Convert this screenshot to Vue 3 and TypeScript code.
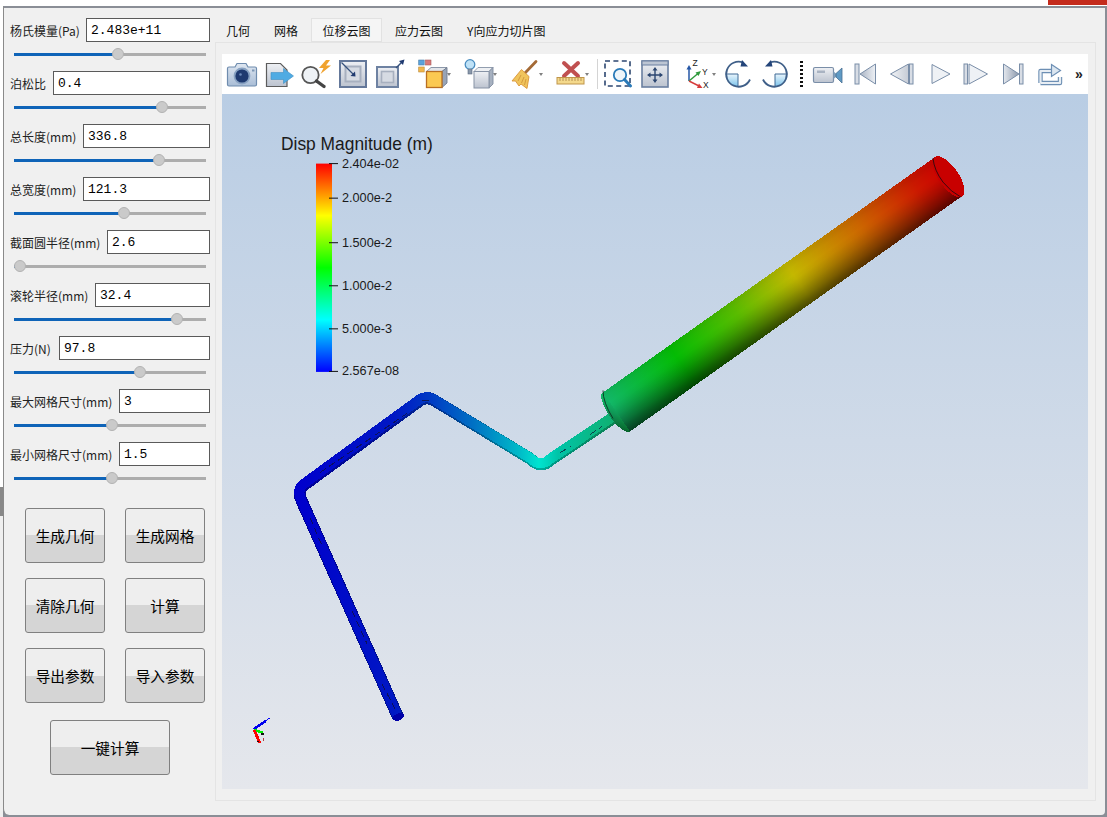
<script setup lang="ts">
interface Param {
  label: string;
  value: string;
  inputWidth: number;
  thumb: number;
}

const params: Param[] = [
  { label: '杨氏模量(Pa)', value: '2.483e+11', inputWidth: 124, thumb: 103.5 },
  { label: '泊松比', value: '0.4', inputWidth: 157, thumb: 147.5 },
  { label: '总长度(mm)', value: '336.8', inputWidth: 127, thumb: 144.5 },
  { label: '总宽度(mm)', value: '121.3', inputWidth: 127, thumb: 109.5 },
  { label: '截面圆半径(mm)', value: '2.6', inputWidth: 103, thumb: 5.5 },
  { label: '滚轮半径(mm)', value: '32.4', inputWidth: 115, thumb: 162.5 },
  { label: '压力(N)', value: '97.8', inputWidth: 151, thumb: 125.5 },
  { label: '最大网格尺寸(mm)', value: '3', inputWidth: 91, thumb: 97.5 },
  { label: '最小网格尺寸(mm)', value: '1.5', inputWidth: 91, thumb: 97.5 },
];

const actions = ['生成几何', '生成网格', '清除几何', '计算', '导出参数', '导入参数'];
const tabs = ['几何', '网格', '位移云图', '应力云图', 'Y向应力切片图'];

const ticks = [
  { y: 163.5, text: '2.404e-02' },
  { y: 198, text: '2.000e-2' },
  { y: 242.5, text: '1.500e-2' },
  { y: 285.5, text: '1.000e-2' },
  { y: 328.5, text: '5.000e-3' },
  { y: 371, text: '2.567e-08' },
];

// facet shading across the roller, top edge to bottom edge
const shade = [
  [0, 0.06], [0.1, 0.02], [0.25, 0], [0.35, 0.03], [0.45, 0.1], [0.55, 0.18],
  [0.65, 0.28], [0.75, 0.38], [0.85, 0.5], [1, 0.65],
];

const pipe = 'M398 716 L302 501 Q296 489 306 483 L420 400 Q428 395 436 401 L530 458 Q541 469 551 459 L614 417';
</script>

<template>
  <div class="screen">
    <div class="top-strip"><div class="close-edge"></div></div>
    <div class="body-row">
      <div class="left-strip">
        <div class="strip-a"></div>
        <div class="strip-b"></div>
        <div class="strip-c"></div>
      </div>
      <div class="window">
        <aside class="sidebar">
          <div v-for="p in params" :key="p.label" class="param">
            <div class="param-row">
              <label>{{ p.label }}</label>
              <input :value="p.value" :style="{ width: p.inputWidth + 'px' }" readonly />
            </div>
            <div class="slider">
              <div class="slider-fill" :style="{ width: p.thumb + 'px' }"></div>
              <div class="slider-thumb" :style="{ left: p.thumb - 6 + 'px' }"></div>
            </div>
          </div>
          <div class="actions">
            <button v-for="a in actions" :key="a">{{ a }}</button>
          </div>
          <button class="run-all">一键计算</button>
        </aside>

        <main class="content">
          <div class="tabs">
            <div v-for="t in tabs" :key="t" class="tab" :class="{ active: t === '位移云图' }">{{ t }}</div>
          </div>
          <div class="pane">
            <div class="toolbar">
              <!-- camera -->
              <svg class="ic" viewBox="0 0 32 32">
                <defs>
                  <linearGradient id="bodyG" x1="0" y1="0" x2="0" y2="1">
                    <stop offset="0" stop-color="#dfe7f1" />
                    <stop offset="1" stop-color="#a9bdd6" />
                  </linearGradient>
                  <linearGradient id="greyG" x1="0" y1="0" x2="0" y2="1">
                    <stop offset="0" stop-color="#eef0f4" />
                    <stop offset="1" stop-color="#bcc3cf" />
                  </linearGradient>
                  <linearGradient id="vcrG" x1="0" y1="0" x2="1" y2="0">
                    <stop offset="0" stop-color="#aab4c4" />
                    <stop offset="1" stop-color="#eef1f5" />
                  </linearGradient>
                  <linearGradient id="vcrD" x1="0" y1="0" x2="1" y2="0">
                    <stop offset="0" stop-color="#e4e8ee" />
                    <stop offset="1" stop-color="#8d99ac" />
                  </linearGradient>
                  <linearGradient id="quadG" x1="0" y1="0" x2="0" y2="1">
                    <stop offset="0" stop-color="#eaf5fc" />
                    <stop offset="1" stop-color="#7cc4ec" />
                  </linearGradient>
                </defs>
                <path d="M3 9 H9 L11 5.5 H20 L22 9 H29 Q30.5 9 30.5 10.5 V26.5 Q30.5 28 29 28 H3 Q1.5 28 1.5 26.5 V10.5 Q1.5 9 3 9Z" fill="url(#bodyG)" stroke="#6f8cae" stroke-width="1.2" />
                <circle cx="16" cy="18" r="8.4" fill="#88a2c2" />
                <circle cx="16" cy="18" r="6.6" fill="#1f3a70" />
                <circle cx="14.5" cy="16.5" r="1.3" fill="#6a88b8" />
                <rect x="26" y="11.5" width="2.5" height="2" fill="#7d97b6" />
              </svg>
              <!-- save data -->
              <svg class="ic" viewBox="0 0 32 32">
                <path d="M3.5 5.5 H17.5 L24 12 V28.5 H3.5Z" fill="url(#greyG)" stroke="#5c5c5c" stroke-width="1.2" />
                <path d="M8 14.5 H20.5 V10.5 L30.5 18 L20.5 25.5 V21.5 H8Z" fill="#4fabe3" stroke="#3f8fc4" stroke-width=".6" />
              </svg>
              <!-- magnifier bolt -->
              <svg class="ic" viewBox="0 0 32 32">
                <circle cx="10.5" cy="17" r="8.2" fill="#eef2f6" stroke="#555" stroke-width="1.8" />
                <path d="M16.5 23 L24 28.5" stroke="#444" stroke-width="3.4" stroke-linecap="round" />
                <path d="M26 2 L19 10 H23.5 L20.5 16 L31 7.5 H26 L30 2Z" fill="#f0a22e" />
              </svg>
              <!-- reset box -->
              <svg class="ic" viewBox="0 0 32 32">
                <rect x="3" y="3" width="26" height="26" fill="url(#greyG)" stroke="#64789a" stroke-width="2" />
                <rect x="8.5" y="8.5" width="15" height="15" fill="#d6dbe3" stroke="#a7b0bf" stroke-width="2" />
                <path d="M4.5 4.5 L17 17" stroke="#35507c" stroke-width="1.3" />
                <path d="M18.5 18.5 L18 13.5 L13.5 18Z" fill="#1f3a70" />
              </svg>
              <!-- box outward -->
              <svg class="ic" viewBox="0 0 32 32">
                <rect x="3" y="9" width="21" height="20" fill="url(#greyG)" stroke="#6e82a2" stroke-width="2" />
                <rect x="7.5" y="13.5" width="12" height="11" fill="#d6dbe3" stroke="#a7b0bf" stroke-width="1.6" />
                <path d="M22 10 L28 4" stroke="#35507c" stroke-width="1.4" />
                <path d="M30.5 1.5 L25 3 L29 7Z" fill="#1f3a70" />
              </svg>
              <!-- representation -->
              <div class="menu wide first-menu">
                <svg class="ic" viewBox="0 0 32 32">
                  <rect x="1.7" y="2" width="5.5" height="5" fill="#5aa2dc" stroke="#4a7ea8" stroke-width=".6" />
                  <rect x="8.5" y="2" width="5.5" height="5" fill="#d87a7a" stroke="#a75a5a" stroke-width=".6" />
                  <rect x="1.7" y="9" width="5.5" height="5" fill="#f2b64a" stroke="#b88a3a" stroke-width=".6" />
                  <path d="M9.5 13.5 L14 9.5 H30 L25 13.5Z" fill="#e3e6ea" stroke="#7f8ca0" stroke-width=".9" />
                  <path d="M25 13.5 L30 9.5 V25 L25 29.5Z" fill="#98a4b6" stroke="#6f7c90" stroke-width=".9" />
                  <rect x="9.5" y="13.5" width="15.5" height="16" fill="#fbc952" stroke="#b96f22" stroke-width="1.3" />
                </svg>
                <span class="caret"></span>
              </div>
              <!-- light cube -->
              <div class="menu wide">
                <svg class="ic" viewBox="0 0 32 32">
                  <path d="M11 13.5 L15 9.5 H30 L26 13.5Z" fill="#eef0f3" stroke="#8793a6" stroke-width=".9" />
                  <path d="M26 13.5 L30 9.5 V26 L26 30Z" fill="#a7b1c0" stroke="#808ca0" stroke-width=".9" />
                  <rect x="11" y="13.5" width="15" height="16.5" fill="url(#greyG)" stroke="#8793a6" stroke-width="1" />
                  <circle cx="7" cy="6.5" r="4.8" fill="#bfe2f7" stroke="#4a8dc0" stroke-width="1.3" />
                  <rect x="5" y="11" width="4" height="5" fill="#8a98aa" stroke="#596a80" stroke-width=".6" />
                </svg>
                <span class="caret"></span>
              </div>
              <!-- broom -->
              <div class="menu wide">
                <svg class="ic" viewBox="0 0 32 32">
                  <path d="M27 3.5 L16 15" stroke="#a46a36" stroke-width="2.8" stroke-linecap="round" />
                  <path d="M12.5 11.5 L20 18.5 L18 30.5 L12 26 L10 28 L6.5 23 L3 23Z" fill="#f0c45c" stroke="#d9953a" stroke-width=".9" />
                  <path d="M12 17 L9 23 M15 19 L12.5 25 M17 21 L15.5 27" stroke="#c98a34" stroke-width=".7" />
                </svg>
                <span class="caret"></span>
              </div>
              <!-- delete ruler -->
              <div class="menu wide">
                <svg class="ic" viewBox="0 0 32 32">
                  <path d="M9 5 L23 18 M23 5 L9 18" stroke="#c05050" stroke-width="4" stroke-linecap="round" />
                  <rect x="2" y="19.5" width="27" height="6.5" fill="#f4d98c" stroke="#c0954a" stroke-width="1" />
                  <path d="M5 20 V23 M8 20 V23 M11 20 V23 M14 20 V23 M17 20 V23 M20 20 V23 M23 20 V23 M26 20 V23" stroke="#a88444" stroke-width=".8" />
                </svg>
                <span class="caret"></span>
              </div>
              <div class="sep"></div>
              <!-- zoom to box -->
              <svg class="ic" viewBox="0 0 32 32">
                <rect x="3" y="3" width="25" height="25" fill="none" stroke="#2c4670" stroke-width="1.6" stroke-dasharray="5 3.4" />
                <circle cx="18" cy="17" r="6.2" fill="#eef5fa" stroke="#2a7ab8" stroke-width="1.8" />
                <path d="M22.5 21.5 L28.5 28" stroke="#2a7ab8" stroke-width="3" stroke-linecap="round" />
              </svg>
              <!-- center -->
              <svg class="ic" viewBox="0 0 32 32">
                <rect x="3" y="3" width="26" height="26" fill="url(#greyG)" stroke="#6a7fa0" stroke-width="1.6" />
                <rect x="3" y="3" width="26" height="4" fill="#bcc5d3" stroke="#6a7fa0" stroke-width="1" />
                <path d="M16 11 V23 M10 17 H22" stroke="#2c4670" stroke-width="1.4" />
                <path d="M16 9 L13.5 12.5 H18.5Z M16 25 L13.5 21.5 H18.5Z M8 17 L11.5 14.5 V19.5Z M24 17 L20.5 14.5 V19.5Z" fill="#2c4670" />
              </svg>
              <!-- axes -->
              <div class="menu axes">
                <svg class="ic" viewBox="0 0 32 32">
                  <path d="M7 23 V10" stroke="#2456a6" stroke-width="1.5" />
                  <path d="M7 7 L4.5 11.5 H9.5Z" fill="#2456a6" />
                  <path d="M7 23 L16 15.5" stroke="#2f9a3c" stroke-width="1.5" />
                  <path d="M19 13 L13.5 14.5 L16.5 18Z" fill="#2f9a3c" />
                  <path d="M7 23 L17 28" stroke="#d63c3c" stroke-width="1.5" />
                  <path d="M20.5 30 L15 30 L17 25.5Z" fill="#d63c3c" />
                  <text x="10.5" y="8" class="ax">Z</text>
                  <text x="20" y="16.5" class="ax">Y</text>
                  <text x="21" y="29.5" class="ax">X</text>
                </svg>
                <span class="caret"></span>
              </div>
              <!-- rotate cw -->
              <svg class="ic" viewBox="0 0 32 32">
                <path d="M3.5 16 H16 V28.5 A12.5 12.5 0 0 1 3.5 16Z" fill="url(#quadG)" />
                <path d="M3.5 16 H16 V28.5" fill="none" stroke="#3f6a96" stroke-width="1" />
                <path d="M28 21.5 A12.5 12.5 0 1 1 21 4.5" fill="none" stroke="#3f5f88" stroke-width="1.8" />
                <path d="M26 8.5 L18.5 8.5 L20 2Z" fill="#24457a" />
              </svg>
              <!-- rotate ccw -->
              <svg class="ic" viewBox="0 0 32 32">
                <path d="M28.5 16 H16 V28.5 A12.5 12.5 0 0 0 28.5 16Z" fill="url(#quadG)" />
                <path d="M28.5 16 H16 V28.5" fill="none" stroke="#3f6a96" stroke-width="1" />
                <path d="M4 21.5 A12.5 12.5 0 1 0 11 4.5" fill="none" stroke="#3f5f88" stroke-width="1.8" />
                <path d="M6 8.5 L13.5 8.5 L12 2Z" fill="#24457a" />
              </svg>
              <div class="dots"></div>
              <!-- video -->
              <svg class="ic video" viewBox="0 0 32 32">
                <rect x="2.5" y="9.5" width="20" height="15" rx="1.5" fill="url(#greyG)" stroke="#7a8ea8" stroke-width="1.2" />
                <rect x="6" y="12.5" width="8" height="2.5" fill="#a9b3c2" />
                <path d="M22.5 13.5 L25 15.5 V19 L22.5 21Z" fill="#7fa0bd" />
                <path d="M25 15.5 L31 10 V25 L25 19Z" fill="#5f9ac4" stroke="#496f92" stroke-width=".8" />
              </svg>
              <!-- first -->
              <svg class="ic" viewBox="0 0 32 32">
                <rect x="7" y="6" width="4" height="20" fill="#d8dde5" stroke="#7a8ea8" />
                <path d="M27.5 6 V26 L12 16Z" fill="url(#vcrG)" stroke="#7a8ea8" />
              </svg>
              <!-- previous -->
              <svg class="ic" viewBox="0 0 32 32">
                <path d="M23.5 6 V26 L5.5 16Z" fill="url(#vcrD)" stroke="#7a8ea8" fill-opacity=".5" />
                <rect x="24.5" y="6" width="3.5" height="20" fill="#d8dde5" stroke="#7a8ea8" />
              </svg>
              <!-- play -->
              <svg class="ic" viewBox="0 0 32 32">
                <path d="M10 6.5 L28 16 L10 25.5Z" fill="#eef1f5" stroke="#7a8ea8" />
              </svg>
              <!-- next -->
              <svg class="ic" viewBox="0 0 32 32">
                <rect x="5" y="6" width="3.5" height="20" fill="#d8dde5" stroke="#7a8ea8" />
                <path d="M10 6 L28.5 16 L10 26Z" fill="#eef1f5" stroke="#7a8ea8" />
              </svg>
              <!-- last -->
              <svg class="ic" viewBox="0 0 32 32">
                <path d="M7.5 6 L23 16 L7.5 26Z" fill="url(#vcrD)" stroke="#7a8ea8" />
                <rect x="23.5" y="6" width="3.5" height="20" fill="#d8dde5" stroke="#7a8ea8" />
              </svg>
              <!-- loop -->
              <svg class="ic" viewBox="0 0 32 32">
                <path d="M7.5 25 V13 H19 M7.5 25 H27 V19" fill="none" stroke="#6d8fb4" stroke-width="4.4" stroke-linejoin="round" />
                <path d="M7.5 25 V13 H19 M7.5 25 H27 V19" fill="none" stroke="#e8eef4" stroke-width="2.2" stroke-linejoin="round" />
                <path d="M18.5 6.5 L27.5 12.5 L18.5 18.5Z" fill="#dbe6f0" stroke="#6d8fb4" stroke-width="1.2" />
              </svg>
              <span class="more">»</span>
            </div>

            <div class="viewport">
              <svg class="scene" viewBox="222 94 866 694" preserveAspectRatio="none">
                <defs>
                  <linearGradient id="bg" x1="0" y1="0" x2="0" y2="1">
                    <stop offset="0" stop-color="#b9cde4" />
                    <stop offset="1" stop-color="#e5e7ec" />
                  </linearGradient>
                  <linearGradient id="lut" x1="0" y1="0" x2="0" y2="1">
                    <stop offset="0" stop-color="#ff0000" />
                    <stop offset=".25" stop-color="#ffff00" />
                    <stop offset=".5" stop-color="#00ff00" />
                    <stop offset=".75" stop-color="#00ffff" />
                    <stop offset="1" stop-color="#0000ff" />
                  </linearGradient>
                  <linearGradient id="axisG" gradientUnits="userSpaceOnUse" x1="616" y1="412" x2="949" y2="177">
                    <stop offset="0" stop-color="#12b868" />
                    <stop offset=".06" stop-color="#0cb848" />
                    <stop offset=".2" stop-color="#04bc04" />
                    <stop offset=".38" stop-color="#58bc00" />
                    <stop offset=".55" stop-color="#c4b800" />
                    <stop offset=".75" stop-color="#cc6600" />
                    <stop offset=".92" stop-color="#cc1800" />
                    <stop offset="1" stop-color="#cc0000" />
                  </linearGradient>
                  <linearGradient id="shadeG" gradientUnits="userSpaceOnUse" x1="603" y1="392" x2="630" y2="431">
                    <stop v-for="s in shade" :key="s[0]" :offset="s[0]" stop-color="#000" :stop-opacity="s[1]" />
                  </linearGradient>
                  <linearGradient id="pipeG" gradientUnits="userSpaceOnUse" x1="300" y1="0" x2="615" y2="0">
                    <stop offset="0" stop-color="#0000cc" />
                    <stop offset=".3" stop-color="#0018c4" />
                    <stop offset=".41" stop-color="#0038c4" />
                    <stop offset=".55" stop-color="#0070c4" />
                    <stop offset=".7" stop-color="#00bcc8" />
                    <stop offset=".76" stop-color="#00e4d0" />
                    <stop offset=".82" stop-color="#00c4a8" />
                    <stop offset="1" stop-color="#10b070" />
                  </linearGradient>
                </defs>
                <rect x="222" y="94" width="866" height="694" fill="url(#bg)" />

                <!-- scalar bar -->
                <text x="281" y="150" class="bar-title">Disp Magnitude (m)</text>
                <rect x="316" y="163.5" width="16" height="208" fill="url(#lut)" />
                <g v-for="t in ticks" :key="t.text">
                  <line x1="329" :y1="t.y" x2="338" :y2="t.y" stroke="#111" stroke-width="1" />
                  <text x="342" :y="t.y + 4" class="bar-label">{{ t.text }}</text>
                </g>

                <!-- model -->
                <g shape-rendering="crispEdges">
                  <path :d="pipe" fill="none" stroke="url(#pipeG)" stroke-width="12" stroke-linejoin="round" />
                  <path :d="pipe" fill="none" stroke="#000" stroke-opacity=".25" stroke-width="12" stroke-linejoin="round" />
                  <path :d="pipe" fill="none" stroke="url(#pipeG)" stroke-width="10" stroke-linejoin="round" transform="translate(-.5 -1)" />
                  <ellipse cx="398.5" cy="716" rx="6" ry="3.5" transform="rotate(-22 398.5 716)" fill="#0000a8" />
                  <path d="M310 517 L322 545 M352 610 L367 643 M382 683 L395 708 M320 472 L407 413 M422 400 H432 M560 452 L571 446 M590 434 L602 426" fill="none" stroke="#101030" stroke-opacity=".7" stroke-width="1" stroke-dasharray="7 4" />
                  <ellipse cx="616.5" cy="411.5" rx="24" ry="8" transform="rotate(55 616.5 411.5)" fill="url(#axisG)" />
                  <ellipse cx="616.5" cy="411.5" rx="24" ry="8" transform="rotate(55 616.5 411.5)" fill="url(#shadeG)" />
                  <polygon points="603,392 935,157 962,196 630,431" fill="url(#axisG)" />
                  <polygon points="603,392 935,157 962,196 630,431" fill="url(#shadeG)" />
                  <ellipse cx="948.5" cy="176.5" rx="24" ry="10" transform="rotate(55 948.5 176.5)" fill="#c80000" />
                </g>
                <path d="M603 390 Q603 402 613 418" fill="none" stroke="#0c3020" stroke-width=".9" />
                <path d="M933 158 Q934 170 943 182 Q951 192 961 197" fill="none" stroke="#2a0a10" stroke-width=".9" />

                <!-- orientation axes -->
                <g shape-rendering="crispEdges">
                  <path d="M253 728 L270 717" stroke="#0000ff" stroke-width="1" />
                  <path d="M254 728 L266 720" stroke="#0000ee" stroke-width="2.6" />
                  <path d="M254 729 L263 732" stroke="#00f000" stroke-width="2.4" />
                  <path d="M254 729 L260 742" stroke="#ff0000" stroke-width="2.8" />
                  <rect x="261" y="732" width="3" height="2" fill="#111" />
                  <rect x="257" y="740" width="1.5" height="1.5" fill="#111" />
                  <rect x="263" y="737" width="1" height="3" fill="#b04040" />
                </g>
              </svg>
            </div>
          </div>
        </main>
      </div>
    </div>
  </div>
</template>

<style scoped>
.screen {
  width: 1107px;
  height: 817px;
  overflow: hidden;
  background: #8a8e96;
  display: flex;
  flex-direction: column;
  font-family: "Noto Sans CJK SC", "Liberation Sans", sans-serif;
  color: #111;
}

.top-strip {
  height: 6px;
  background: #fff;
  display: flex;
  justify-content: flex-end;
}

.close-edge {
  width: 59px;
  height: 5px;
  background: #c42b1c;
}

.body-row {
  flex: 1;
  display: flex;
  min-height: 0;
}

.left-strip {
  width: 3px;
  display: flex;
  flex-direction: column;
}

.strip-a {
  height: 481px;
  background: #fff;
}

.strip-b {
  height: 29px;
  background: #888;
}

.strip-c {
  flex: 1;
  background: #efefef;
}

.window {
  flex: 1;
  margin: 0 2px 2px 0;
  display: flex;
  background: #f0f0f0;
  border-top: 2px solid #8a8e96;
  border-left: 1px solid #8a8a8a;
  border-radius: 0 0 4px 6px;
}

.sidebar {
  width: 211px;
  box-sizing: border-box;
  padding: 10px 5px 0 6px;
}

.param-row {
  height: 24px;
  display: flex;
  align-items: center;
}

.param-row label {
  flex: 1;
  font-size: 12px;
  white-space: nowrap;
  color: #222;
}

.param-row input {
  height: 24px;
  box-sizing: border-box;
  border: 1px solid #5a5a5a;
  background: #fff;
  padding: 1px 0 0 4px;
  margin: 0;
  outline: none;
  font-family: "Liberation Mono", monospace;
  font-size: 13px;
  color: #000;
}

.slider {
  position: relative;
  width: 192px;
  height: 3px;
  margin: 10.5px 4px 15.5px;
  background: #adadad;
}

.slider-fill {
  height: 3px;
  background: #0f64b8;
}

.slider-thumb {
  position: absolute;
  top: -4.5px;
  width: 12px;
  height: 12px;
  box-sizing: border-box;
  border-radius: 50%;
  background: #cacaca;
  border: 1px solid #b2b2b2;
}

.actions {
  margin: 28.5px 0 0 15px;
  display: grid;
  grid-template-columns: 80px 80px;
  grid-auto-rows: 55px;
  column-gap: 20px;
  row-gap: 15px;
}

button {
  box-sizing: border-box;
  border: 1px solid #808080;
  border-radius: 3px;
  background: linear-gradient(#eeeeee 0 50%, #d5d5d5 50% 100%);
  font-family: "Noto Sans CJK SC", sans-serif;
  font-size: 14.67px;
  color: #000;
  padding: 0;
}

.run-all {
  display: block;
  width: 120px;
  height: 55px;
  margin: 17px 0 0 40px;
}

.content {
  flex: 1;
  min-width: 0;
  display: flex;
  flex-direction: column;
  padding: 10px 9px 14px 0;
}

.tabs {
  height: 24px;
  display: flex;
  margin-left: -1px;
}

.tab {
  padding: 0 12px;
  line-height: 26px;
  font-size: 12px;
  color: #111;
  white-space: nowrap;
}

.tab.active {
  background: #f5f5f5;
  box-shadow: inset 0 0 0 1px #e2e2e2;
  margin: 0 1px 0 1px;
  padding: 0 11.5px;
}

.pane {
  flex: 1;
  min-height: 0;
  border: 1px solid #e4e4e4;
  padding: 11px 7px 11px 6px;
  display: flex;
  flex-direction: column;
}

.toolbar {
  height: 40px;
  flex: none;
  background: #fff;
  display: flex;
  align-items: center;
  gap: 5px;
  padding-left: 4px;
}

.ic {
  width: 32px;
  height: 32px;
  flex: none;
  display: block;
}

.ax {
  font-family: "Liberation Sans", sans-serif;
  font-size: 8.5px;
  fill: #222;
}

.menu {
  width: 35px;
  flex: none;
  display: flex;
  align-items: center;
}

.menu.wide {
  margin-right: 6px;
}

.menu.first-menu,
.menu.axes {
  margin-left: 6px;
}

.caret {
  flex: none;
  width: 0;
  height: 0;
  margin-left: -2px;
  border-left: 2.5px solid transparent;
  border-right: 2.5px solid transparent;
  border-top: 3px solid #808080;
}

.sep {
  width: 1px;
  height: 30px;
  flex: none;
  margin: 0 -1px 0 -4px;
  background: #d4d4d4;
}

.dots {
  width: 3px;
  height: 27px;
  flex: none;
  margin-left: 4px;
  background: repeating-linear-gradient(#111 0 2px, transparent 2px 4px);
}

.video {
  margin-left: 3px;
}

.more {
  margin-left: 5px;
  font-family: "Liberation Sans", sans-serif;
  font-size: 14px;
  font-weight: 700;
  line-height: 1;
  color: #222;
}

.viewport {
  flex: 1;
  min-height: 0;
}

.scene {
  width: 100%;
  height: 100%;
  display: block;
}

.bar-title {
  font-family: "Liberation Sans", sans-serif;
  font-size: 17.4px;
  fill: #1a1a1a;
}

.bar-label {
  font-family: "Liberation Sans", sans-serif;
  font-size: 12.7px;
  fill: #1a1a1a;
}
</style>
